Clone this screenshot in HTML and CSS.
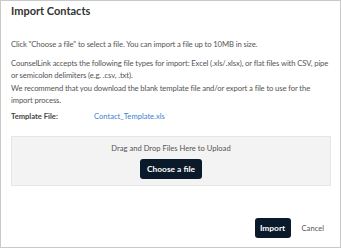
FILE: index.html
```html
<!DOCTYPE html>
<html lang="en">
<head>
    <meta charset="UTF-8">
    <title>Import Contacts</title>
    <link rel="stylesheet" href="styles.css">
</head>
<body>
    <div class="dialog">
        <!-- Header -->
        <h1 class="dialog-title">Import Contacts</h1>

        <!-- Body -->
        <div class="dialog-body">
            <p class="intro">Click "Choose a file" to select a file. You can import a file up to 10MB in size.</p>
            <p class="types">CounselLink accepts the following file types for import: Excel (.xls/.xlsx), or flat files with CSV, pipe or semicolon delimiters (e.g. .csv, .txt).</p>
            <p>We recommend that you download the blank template file and/or export a file to use for the import process.</p>

            <div class="template-row">
                <span class="template-label">Template File:</span>
                <a href="#" class="template-link">Contact_Template.xls</a>
            </div>

            <div class="drop-zone">
                <div class="drop-text">Drag and Drop Files Here to Upload</div>
                <button type="button" class="btn">Choose a file</button>
            </div>
        </div>

        <!-- Footer -->
        <div class="dialog-footer">
            <button type="button" class="btn btn-import">Import</button>
            <a href="#" class="cancel-link">Cancel</a>
        </div>
    </div>
</body>
</html>
```

FILE: styles.css
```css
* {
    box-sizing: border-box;
    margin: 0;
    padding: 0;
}

body {
    font-family: 'Lato', 'Liberation Sans', sans-serif;
    background-color: #ffffff;
}

/* Dialog frame */
.dialog {
    width: 341px;
    height: 248px;
    border: 1px solid #c9c9c9;
    display: flex;
    flex-direction: column;
    padding: 0 9px 0 10px;
}

.dialog-title {
    font-size: 11px;
    font-weight: 700;
    color: #333333;
    line-height: 14px;
    margin-top: 3px;
}

.dialog-body {
    margin-top: 20px;
}

.dialog-body p {
    font-size: 7.7px;
    line-height: 12px;
    letter-spacing: -0.12px;
    color: #555555;
}

.dialog-body .intro {
    margin-bottom: 7px;
}

.dialog-body .types {
    margin-bottom: 1px;
}

/* Template file row */
.template-row {
    display: flex;
    font-size: 7.6px;
    line-height: 12px;
    margin-top: 4px;
}

.template-label {
    width: 83px;
    font-weight: 700;
    color: #444444;
}

.template-link {
    color: #3d83d1;
    text-decoration: none;
}

/* Drop zone */
.drop-zone {
    margin-top: 14px;
    height: 50px;
    background-color: #f3f3f3;
    border: 1px solid #e6e6e6;
    display: flex;
    flex-direction: column;
    align-items: center;
}

.drop-text {
    font-size: 7.6px;
    line-height: 12px;
    color: #555555;
    margin-top: 5px;
}

.btn {
    background-color: #0b1a2b;
    color: #ffffff;
    border: none;
    border-radius: 3px;
    font-family: inherit;
    font-size: 8.4px;
    font-weight: 700;
    height: 20px;
    padding: 0 7px;
    margin-top: 5px;
    cursor: pointer;
}

/* Footer */
.dialog-footer {
    margin-top: auto;
    margin-bottom: 9px;
    display: flex;
    justify-content: flex-end;
    align-items: center;
    padding-right: 7px;
}

.btn-import {
    margin-top: 0;
    width: 36px;
    padding: 0;
}

.cancel-link {
    font-size: 7.6px;
    color: #555555;
    text-decoration: none;
    margin-left: 11px;
}
```
